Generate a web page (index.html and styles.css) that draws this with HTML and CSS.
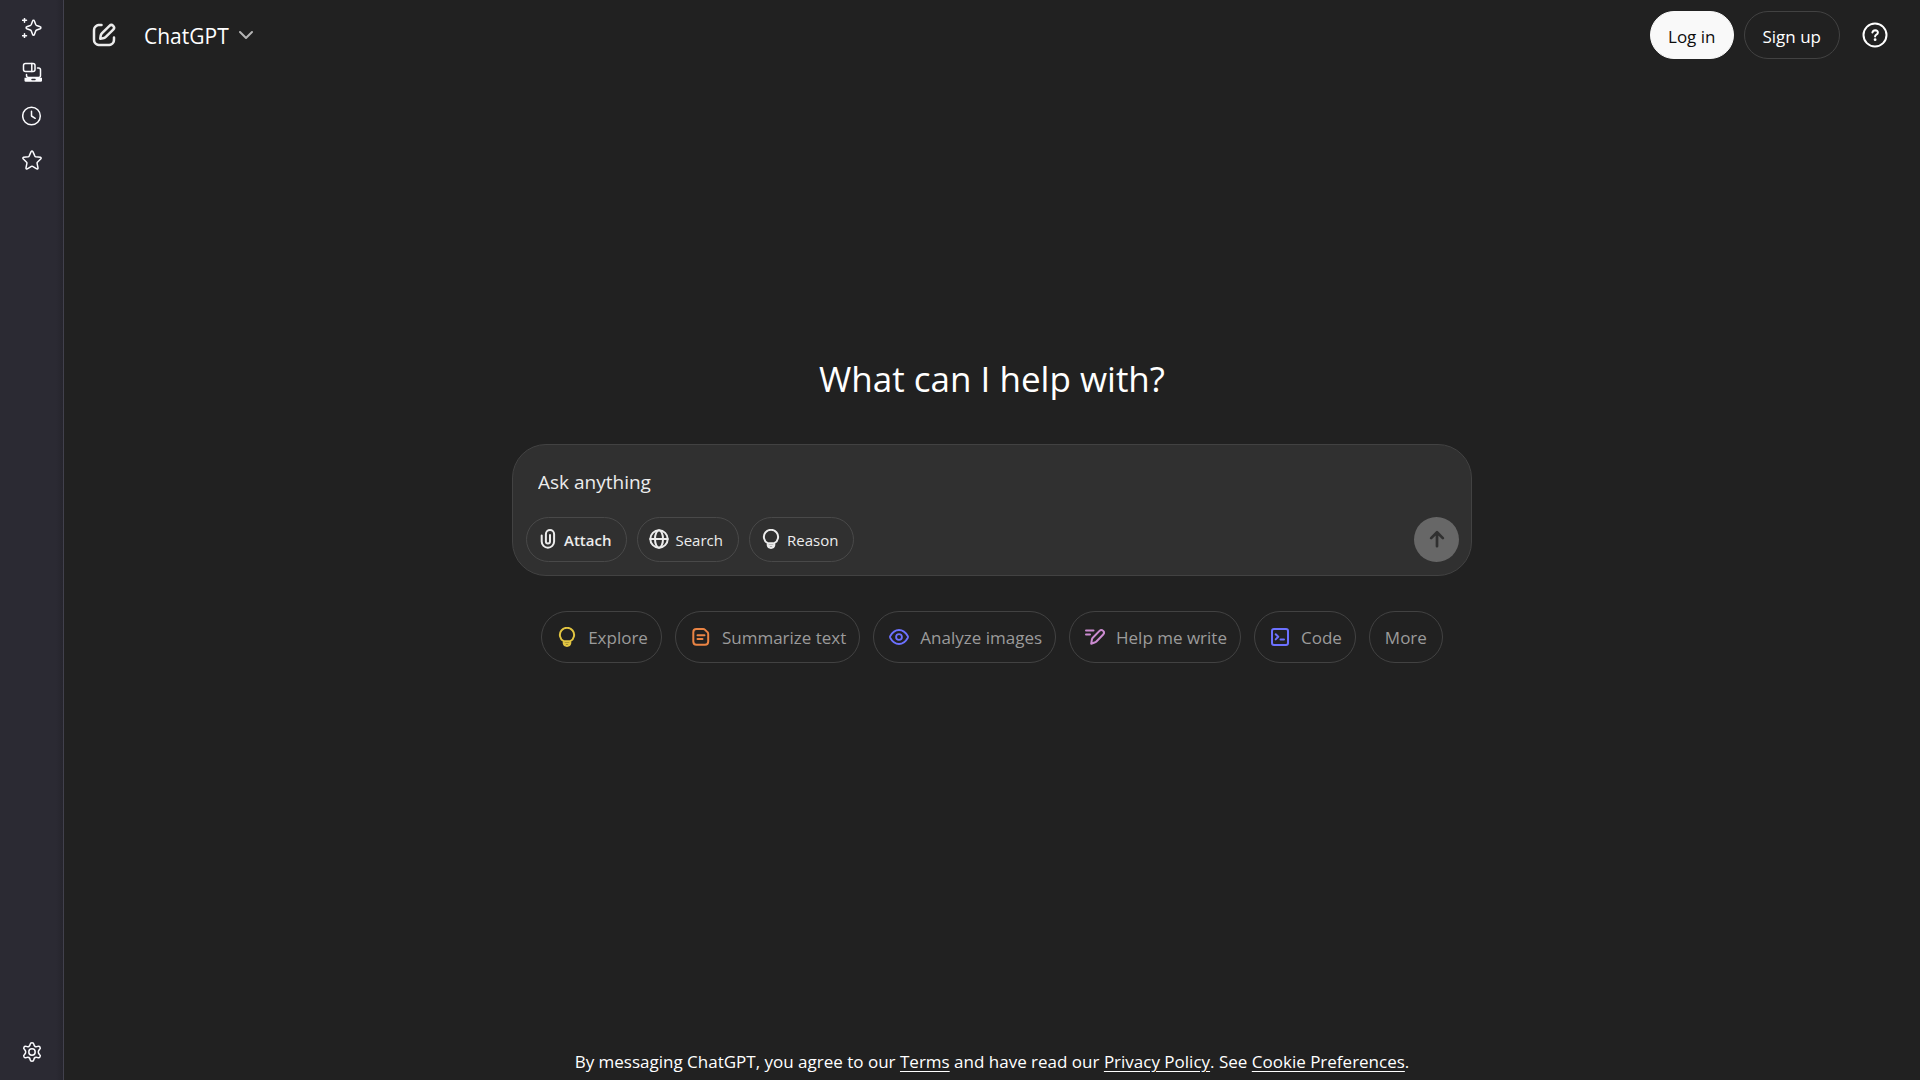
FILE: index.html
```html
<!DOCTYPE html>
<html lang="en">
<head>
<meta charset="utf-8">
<meta name="viewport" content="width=device-width, initial-scale=1">
<title>ChatGPT</title>
<link rel="stylesheet" href="styles.css">
</head>
<body>
<div class="window">
  <nav class="sidebar" aria-label="Browser sidebar">
    <button class="side-button" aria-label="AI chat">
      <svg viewBox="0 0 20 20"><path d="M11.5 1.2c.5 0 .8.3.9.7l1.3 3.6c.2.5.5.8 1 1l3.5 1.300c.9.3.9 1.500 0 1.900l-3.500 1.300c-.5.2-.8.5-1 1l-1.300 3.600c-.3.9-1.500.9-1.800 0L9.300 12c-.2-.5-.5-.8-1-1L4.800 9.700c-.9-.4-.9-1.600 0-1.900l3.500-1.300c.5-.2.8-.5 1-1l1.300-3.600c.1-.4.5-.7.900-.7Z" transform="translate(0 1)"/><path d="M2.500.3v4M.5 2.300h4M2.500 15.700v4M.5 17.700h4"/></svg>
    </button>
    <button class="side-button" aria-label="Synced tabs">
      <svg viewBox="0 0 20 20"><rect x="1.500" y="1.500" width="11.500" height="8" rx="2"/><path d="M9.800 1.500v8M4.500 12.500v1q0 2 2 2h10q2 0 2-2V8q0-2-2-2h-1"/><path class="solid" d="M2.500 15.800h17.500v2.700q0 1.200-1.200 1.200H3.700q-1.200 0-1.200-1.200Z"/><path class="notch" d="M10 17.600h3"/></svg>
    </button>
    <button class="side-button" aria-label="History">
      <svg viewBox="0 0 20 20"><circle cx="9.500" cy="10" r="8.800"/><path d="M9.500 5.200V10l3.700 2.300"/></svg>
    </button>
    <button class="side-button" aria-label="Bookmarks">
      <svg viewBox="0 0 20 20"><path d="M9.100 1.600q.9-1.200 1.800 0l2 4.500q.3.500.9.600l4.600.6q1.200.4.500 1.500l-3.500 3.500q-.4.400-.3 1l.9 4.600q0 1.300-1.300.9l-4.100-2.400q-.600-.300-1.200 0l-4.100 2.400q-1.300.4-1.300-.9l.9-4.600q.1-.6-.3-1L1.100 8.800q-.7-1.100.5-1.500l4.600-.6q.6-.1.900-.6Z"/></svg>
    </button>
    <button class="side-button side-settings" aria-label="Customize sidebar">
      <svg viewBox="0 0 20 20"><circle cx="10" cy="10" r="3.200"/><path d="M8.200 2.200q.2-1.400 1.800-1.400t1.800 1.400q.2 1.700 1.300 2.300 1.100.600 2.600-.1 1.500-.6 2.300.7.800 1.400-.4 2.300Q16.300 8.600 16.300 10t1.300 2.600q1.200.9.400 2.300-.8 1.300-2.300.7-1.500-.7-2.600-.1t-1.300 2.300q-.2 1.400-1.800 1.400t-1.800-1.400q-.2-1.700-1.300-2.300-1.100-.6-2.600.1-1.500.6-2.300-.7-.8-1.400.4-2.300Q3.700 11.400 3.700 10T2.400 7.400Q1.200 6.500 2 5.100q.8-1.300 2.300-.7 1.500.7 2.600.1t1.300-2.300Z"/></svg>
    </button>
  </nav>

  <div class="page">
    <header class="topbar">
      <button class="icon-button" aria-label="New chat">
        <svg class="icon-edit" viewBox="0 0 24 24" width="30" height="30" fill="currentColor"><path d="M15.673 3.913a3.121 3.121 0 1 1 4.414 4.414l-5.937 5.937a5 5 0 0 1-2.828 1.415l-2.180.311a1 1 0 0 1-1.132-1.130l.311-2.180A5 5 0 0 1 9.736 9.850l5.937-5.937Zm3 1.414a1.121 1.121 0 0 0-1.586 0l-5.937 5.937a3 3 0 0 0-.849 1.697l-.123.860.860-.122a3 3 0 0 0 1.698-.849l5.937-5.937a1.121 1.121 0 0 0 0-1.586ZM11 4a1 1 0 0 1-1 1c-.998 0-1.702.008-2.253.060-.540.052-.862.141-1.109.267a3 3 0 0 0-1.311 1.311c-.134.263-.226.611-.276 1.216C5.001 8.471 5 9.264 5 10.400v3.200c0 1.137 0 1.929.051 2.546.050.605.142.953.276 1.216a3 3 0 0 0 1.311 1.311c.263.134.611.226 1.216.276.617.050 1.410.051 2.546.051h3.200c1.137 0 1.929 0 2.546-.051.605-.050.953-.142 1.216-.276a3 3 0 0 0 1.311-1.311c.126-.247.215-.569.266-1.108.053-.552.060-1.256.061-2.255a1 1 0 1 1 2 .002c0 .978-.006 1.780-.069 2.442-.064.673-.192 1.270-.475 1.827a5 5 0 0 1-2.185 2.185c-.592.302-1.232.428-1.961.487C15.600 21 14.727 21 13.643 21h-3.286c-1.084 0-1.958 0-2.666-.058-.728-.060-1.369-.185-1.960-.487a5 5 0 0 1-2.186-2.185c-.302-.592-.428-1.233-.487-1.961C3 15.600 3 14.727 3 13.643v-3.286c0-1.084 0-1.958.058-2.666.060-.729.185-1.369.487-1.961A5 5 0 0 1 5.730 3.545c.556-.284 1.154-.411 1.827-.475C8.220 3.007 9.021 3 10 3a1 1 0 0 1 1 1Z"/></svg>
      </button>
      <button class="model-button"><span class="label">ChatGPT</span>
        <svg viewBox="0 0 14 14" width="14" height="14"><path d="m1 4 6 6 6-6"/></svg>
      </button>
      <div class="account">
        <button class="pill pill-light"><span class="label">Log in</span></button>
        <button class="pill"><span class="label">Sign up</span></button>
        <button class="help-button" aria-label="Help">
          <svg viewBox="0 0 26 26" width="26" height="26"><circle cx="13" cy="13" r="11.500"/><path d="M10.400 10.500Q11 8.200 13.200 8.200q2.600.1 2.700 2.300 0 1.300-1.500 2.100-1.300.7-1.300 2"/><circle class="dot" cx="13.100" cy="17.700" r="1.400"/></svg>
        </button>
      </div>
    </header>

    <main class="hero">
      <h1 class="title">What can I help with?</h1>
      <form class="composer">
        <textarea class="prompt" rows="1" aria-label="Message" placeholder="Ask anything"></textarea>
        <div class="tools">
          <button type="button" class="tool tool-strong"><svg viewBox="0 0 20 20"><path d="M3.700 6.500v6a6.200 6.200 0 0 0 12.400 0V5.200a4.100 4.100 0 0 0-8.200 0v7.300a2.050 2.050 0 0 0 4.100 0V6"/></svg><span class="label">Attach</span></button>
          <button type="button" class="tool"><svg viewBox="0 0 20 20"><circle cx="10" cy="10" r="8.700"/><ellipse cx="10" cy="10" rx="4" ry="8.700"/><path d="M1.300 10h17.400"/></svg><span class="label">Search</span></button>
          <button type="button" class="tool"><svg viewBox="0 0 20 20"><path d="M6.700 14.200a7.100 7.100 0 1 1 6.600 0ZM6.700 14.200v2q.4 2.700 3.300 2.700t3.300-2.700v-2M7 16.600h6"/></svg><span class="label">Reason</span></button>
          <button type="submit" class="send" aria-label="Send"><svg viewBox="0 0 20 20"><path d="M10 18V3M3.500 9 10 2.500 16.500 9"/></svg></button>
        </div>
      </form>
      <div class="chips">
        <button class="chip"><svg class="yellow" viewBox="0 0 20 20"><path d="M6.700 14.200a7.100 7.100 0 1 1 6.600 0ZM6.700 14.200v2q.4 2.700 3.300 2.700t3.300-2.700v-2M7 16.600h6"/></svg><span class="label">Explore</span></button>
        <button class="chip"><svg class="orange" viewBox="0 0 20 20"><path d="M5.500 2h6.700q1 0 1.600.6l2.600 2.500q.8.700.8 1.800v7.600q0 3.200-3.200 3.200H5.500q-3.200 0-3.200-3.200V5.200Q2.300 2 5.500 2ZM6.500 8.200h7M6.500 12h5"/></svg><span class="label">Summarize text</span></button>
        <button class="chip"><svg class="indigo" viewBox="0 0 22 20"><path d="M1.300 10.800q-.4-.8 0-1.600Q5 2.300 11 2.300t9.700 6.900q.4.800 0 1.600-3.700 6.900-9.700 6.900t-9.700-6.900Z"/><circle cx="11" cy="10" r="3.200"/></svg><span class="label">Analyze images</span></button>
        <button class="chip"><svg class="pink" viewBox="0 0 20 20"><path d="M1 3.400h7.500M1 7.500h4M6.200 16.700l.7-4.200q.2-1 .9-1.700l6.700-6.900a2.500 2.500 0 0 1 3.700 3.600l-6.800 7q-.8.800-1.800 1Z"/></svg><span class="label">Help me write</span></button>
        <button class="chip"><svg class="indigo" viewBox="0 0 20 20"><rect x="2" y="2" width="16" height="16" rx="2"/><path d="m5.700 7.200 2.600 2.600-2.600 2.600M10.500 12.400H14"/></svg><span class="label">Code</span></button>
        <button class="chip chip-plain"><span class="label">More</span></button>
      </div>
    </main>

    <footer class="legal">By messaging ChatGPT, you agree to our <a href="#terms">Terms</a> and have read our <a href="#privacy">Privacy Policy</a>. See <a href="#cookies">Cookie Preferences</a>.</footer>
  </div>
</div>
</body>
</html>
```
FILE: styles.css
```css
* {
  box-sizing: border-box;
}

body {
  margin: 0;
  background: #212121;
  color: #fff;
  font-family: "Open Sans", "Noto Sans", sans-serif;
  font-size: 16px;
}

button,
textarea {
  margin: 0;
  padding: 0;
  border: 0;
  background: none;
  color: inherit;
  font: inherit;
}

button {
  display: flex;
  align-items: center;
  justify-content: center;
  white-space: nowrap;
  cursor: pointer;
}

svg {
  flex: none;
  fill: none;
  stroke: currentColor;
  stroke-width: 2;
  stroke-linecap: round;
  stroke-linejoin: round;
}

.label {
  padding-top: 2px;
}

.window {
  display: flex;
  min-height: 100vh;
}

/* Browser sidebar */
.sidebar {
  display: flex;
  flex-direction: column;
  flex: none;
  width: 64px;
  padding: 6px 0;
  border-right: 1px solid #42414d;
  background: linear-gradient(to right, #2b2a33 56px, #26252d);
  color: #fbfbfe;
}

.side-button {
  height: 44px;
}

.side-button svg {
  width: 20px;
  height: 20px;
  stroke-width: 1.5;
}

.side-button .solid {
  fill: currentColor;
  stroke: none;
}

.side-button .notch {
  stroke: #2b2a33;
}

.side-settings {
  margin-top: auto;
}

/* Page */
.page {
  display: flex;
  flex: 1;
  flex-direction: column;
  min-width: 0;
}

.topbar {
  display: flex;
  align-items: center;
  height: 70px;
  padding: 0 32px 0 25px;
}

.icon-button {
  width: 30px;
  height: 40px;
  color: #ececec;
}

.icon-edit {
  fill: currentColor;
  stroke: none;
}

.model-button {
  gap: 10px;
  margin-left: 25px;
  font-size: 21px;
}

.model-button svg {
  color: #b4b4b4;
}

.account {
  display: flex;
  align-items: center;
  gap: 10px;
  margin-left: auto;
}

.pill {
  height: 48px;
  padding: 0 18px 0 17px;
  border: 1px solid #424242;
  border-radius: 24px;
  font-size: 17px;
}

.pill-light {
  border-color: #f9f9f9;
  background: #f9f9f9;
  color: #0d0d0d;
}

.help-button {
  margin-left: 12px;
}

.help-button .dot {
  fill: currentColor;
  stroke: none;
}

.hero {
  display: flex;
  flex: 1;
  flex-direction: column;
  align-items: center;
  justify-content: center;
  padding: 0 24px 103px;
}

.title {
  margin: 0 0 41px;
  font-size: 35px;
  font-weight: 400;
  line-height: 48px;
}

.composer {
  display: flex;
  flex-direction: column;
  width: 100%;
  max-width: 960px;
  padding: 21px 12px 13px 13px;
  border: 1px solid #424242;
  border-radius: 34px;
  background: #303030;
}

.prompt {
  height: 32px;
  margin: 0 12px 19px;
  outline: 0;
  resize: none;
  overflow: hidden;
  font-size: 19px;
  line-height: 32px;
}

.prompt::placeholder {
  color: #ececec;
  opacity: 1;
}

.tools {
  display: flex;
  gap: 10px;
}

.tool {
  gap: 6px;
  height: 45px;
  padding: 0 15px 0 11px;
  border: 1px solid #494949;
  border-radius: 23px;
  color: #ececec;
  font-size: 15px;
}

.tool svg,
.send svg,
.chip svg {
  width: 20px;
  height: 20px;
}

.tool-strong {
  font-weight: 600;
}

.send {
  width: 45px;
  height: 45px;
  margin-left: auto;
  border-radius: 50%;
  background: #676767;
  color: #303030;
}

.send svg {
  width: 18px;
  height: 18px;
  stroke-width: 3;
}

.chips {
  display: flex;
  flex-wrap: wrap;
  justify-content: center;
  gap: 13px;
  margin-top: 35px;
}

.chip {
  gap: 11px;
  height: 52px;
  padding: 0 13px 0 15px;
  border: 1px solid #424242;
  border-radius: 26px;
  color: #9b9b9b;
  font-size: 17px;
}

.chip-plain {
  padding: 0 15px;
}

.yellow { color: #e2c541; }
.orange { color: #ea8444; }
.indigo { color: #6c71ff; }
.pink { color: #cb8bd0; }

.legal {
  padding: 0 16px 6px;
  font-size: 17px;
  line-height: 24px;
  text-align: center;
}

.legal a {
  color: inherit;
  text-underline-offset: 3px;
}
```
